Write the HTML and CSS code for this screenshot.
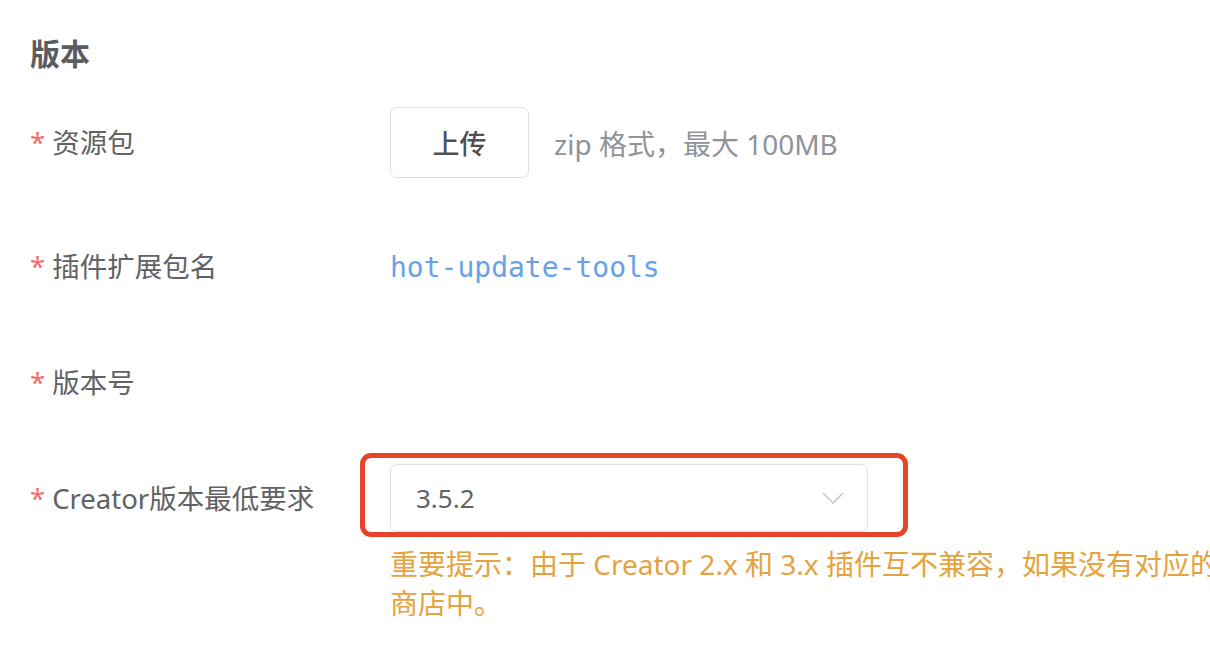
FILE: index.html
```html
<!DOCTYPE html>
<html lang="zh-CN">
<head>
<meta charset="UTF-8">
<title>版本</title>
<link rel="stylesheet" href="styles.css">
</head>
<body>
<div class="page">
    <h2 class="title">版本</h2>
    <div class="form-item upload">
        <label class="label"><span class="req">*</span>资源包</label>
        <div class="content">
            <button class="btn">上传</button>
            <span class="hint">zip 格式，最大 100MB</span>
        </div>
    </div>
    <div class="form-item">
        <label class="label"><span class="req">*</span>插件扩展包名</label>
        <div class="content">
            <span class="code">hot-update-tools</span>
        </div>
    </div>
    <div class="form-item">
        <label class="label"><span class="req">*</span>版本号</label>
        <div class="content"></div>
    </div>
    <div class="form-item">
        <label class="label"><span class="req">*</span>Creator版本最低要求</label>
        <div class="content column">
            <div class="select">
                <span class="value">3.5.2</span>
                <svg class="arrow" width="22" height="12" viewBox="0 0 22 12"><polyline points="1,1 11,11 21,1" fill="none" stroke="#c0c4cc" stroke-width="1.5"/></svg>
                <div class="mark"></div>
            </div>
            <p class="tip">重要提示：由于 Creator 2.x 和 3.x 插件互不兼容，如果没有对应的版本，插件将无法显示在对应版本的<br>商店中。</p>
        </div>
    </div>
</div>
</body>
</html>
```

FILE: styles.css
```css
*{
    margin:0;
    padding:0;
    box-sizing: border-box;
}
html,body{
    width: 1210px;
    height: 666px;
    overflow: hidden;
    background: #fff;
}
body{
    font-family: "Noto Sans", "Noto Sans CJK SC", sans-serif;
    color: #606266;
}
.page{
    padding: 34px 0 0 30px;
}
.title{
    font-size: 30px;
    line-height: 40px;
    font-weight: bold;
    color: #5a5c60;
    margin-bottom: 33px;
}
.form-item{
    display: flex;
    margin-bottom: 46px;
}
.form-item.upload{
    margin-bottom: 54px;
}
.label{
    width: 360px;
    flex-shrink: 0;
    font-size: 27.5px;
    line-height: 70px;
    height: 70px;
    color: #606266;
}
.upload .label{
    line-height: 72px;
}
.req{
    color: #f56c6c;
    margin-right: 7px;
}
.content{
    display: flex;
    align-items: center;
    min-height: 70px;
    width: 900px;
}
.content.column{
    flex-direction: column;
    align-items: flex-start;
}
.btn{
    width: 139px;
    height: 71px;
    border: 1px solid #dcdfe6;
    border-radius: 7px;
    background: #fff;
    font-family: "Noto Sans", "Noto Sans CJK SC", sans-serif;
    font-size: 27px;
    font-weight: 500;
    color: #4f5155;
}
.hint{
    margin-left: 25px;
    font-size: 28px;
    color: #909399;
}
.code{
    font-family: "DejaVu Sans Mono", monospace;
    font-size: 28px;
    color: #67a2e6;
}
.select{
    position: relative;
    width: 478px;
    height: 68px;
    border: 1px solid #dcdfe6;
    border-radius: 7px;
    display: flex;
    align-items: center;
    justify-content: space-between;
    padding: 0 23px 0 25px;
}
.value{
    font-size: 26px;
    color: #606266;
}
.arrow{
    display: block;
}
/* 红色标注框 */
.mark{
    position: absolute;
    left: -31px;
    top: -12px;
    right: -41px;
    bottom: -6px;
    border: 5px solid #e8432b;
    border-radius: 11px;
}
.tip{
    margin-top: 13px;
    font-size: 28px;
    line-height: 39px;
    color: #e6a23c;
    white-space: nowrap;
}
```
